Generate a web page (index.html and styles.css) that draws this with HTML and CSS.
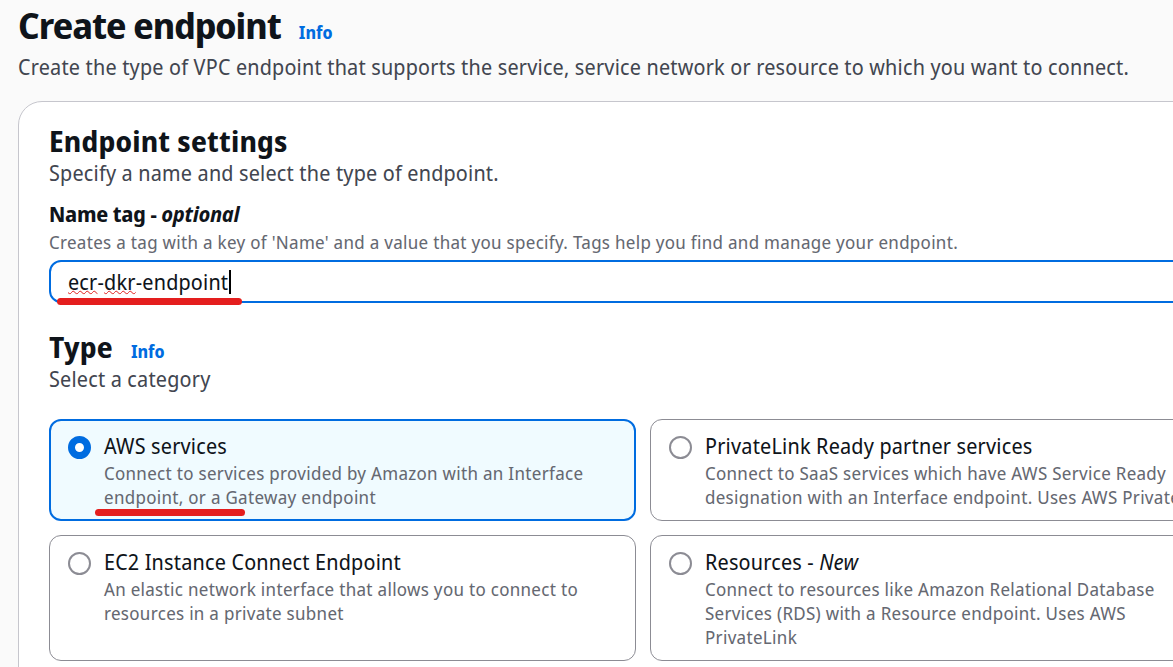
FILE: index.html
```html
<!DOCTYPE html>
<html lang="en">
<head>
<meta charset="utf-8">
<title>Create endpoint</title>
<link rel="stylesheet" href="styles.css">
</head>
<body>
<main class="page">
  <div class="page-header">
    <div class="title-row">
      <h1 class="title">Create endpoint</h1>
      <a class="info-link">Info</a>
    </div>
    <p class="page-desc">Create the type of VPC endpoint that supports the service, service network or resource to which you want to connect.</p>
  </div>

  <section class="card">
    <div class="card-body">
      <h2 class="section-title">Endpoint settings</h2>
      <p class="section-desc">Specify a name and select the type of endpoint.</p>

      <div class="field">
        <div class="field-label">Name tag - <i>optional</i></div>
        <div class="field-desc">Creates a tag with a key of 'Name' and a value that you specify. Tags help you find and manage your endpoint.</div>
        <div class="input">
          <span class="input-value"><span class="spell">ecr</span>-<span class="spell">dkr</span>-endpoint</span><span class="caret"></span>
          <span class="mark mark-input"></span>
        </div>
      </div>

      <div class="type-header">
        <h2 class="section-title">Type</h2>
        <a class="info-link">Info</a>
      </div>
      <p class="section-desc">Select a category</p>

      <div class="tiles">
        <div class="tile selected">
          <span class="radio checked"></span>
          <div class="tile-text">
            <div class="tile-title">AWS services</div>
            <div class="tile-desc">Connect to services provided by Amazon with an Interface<br>endpoint, or a Gateway endpoint</div>
          </div>
          <span class="mark mark-tile"></span>
        </div>
        <div class="tile">
          <span class="radio"></span>
          <div class="tile-text">
            <div class="tile-title">PrivateLink Ready partner services</div>
            <div class="tile-desc">Connect to SaaS services which have AWS Service Ready<br>designation with an Interface endpoint. Uses AWS PrivateLink</div>
          </div>
        </div>
        <div class="tile">
          <span class="radio"></span>
          <div class="tile-text">
            <div class="tile-title">EC2 Instance Connect Endpoint</div>
            <div class="tile-desc">An elastic network interface that allows you to connect to<br>resources in a private subnet</div>
          </div>
        </div>
        <div class="tile">
          <span class="radio"></span>
          <div class="tile-text">
            <div class="tile-title">Resources - <i>New</i></div>
            <div class="tile-desc">Connect to resources like Amazon Relational Database<br>Services (RDS) with a Resource endpoint. Uses AWS<br>PrivateLink</div>
          </div>
        </div>
      </div>
    </div>
  </section>
</main>
</body>
</html>
```
FILE: styles.css
```css
* { box-sizing: border-box; }

html, body { margin: 0; }

body {
  background: #fafafa;
  font-family: "Noto Sans Display", "Open Sans", sans-serif;
  color: #0f141a;
  letter-spacing: 0.2px;
  height: 667px;
  overflow: hidden;
}

.page { padding: 4px 0 0 18px; }

.title-row {
  display: flex;
  align-items: baseline;
  gap: 18px;
}

.title {
  margin: 0;
  font-size: 36px;
  line-height: 44px;
  font-weight: 700;
  letter-spacing: -1px;
}

.info-link {
  font-size: 17px;
  font-weight: 700;
  color: #006ce0;
  letter-spacing: 0;
}

.page-desc {
  margin: 4px 0 0;
  font-size: 21px;
  line-height: 30px;
  color: #424650;
}

.card {
  margin-top: 19px;
  width: 1300px;
  background: #fff;
  border: 1px solid #c6c6cd;
  border-radius: 24px 0 0 0;
  padding: 22px 0 40px 30px;
}

.card-body { width: 1188px; }

.section-title {
  margin: 0;
  font-size: 28px;
  line-height: 34px;
  font-weight: 700;
  letter-spacing: 0.2px;
}

.section-desc {
  margin: 0;
  font-size: 21px;
  line-height: 30px;
  color: #424650;
}

.field { margin-top: 11px; }

.field-label {
  font-size: 21px;
  line-height: 30px;
  font-weight: 700;
  letter-spacing: -0.25px;
}

.field-desc {
  margin-top: 1px;
  font-size: 18px;
  line-height: 24px;
  color: #656871;
  letter-spacing: 0.3px;
}

.input {
  position: relative;
  margin-top: 6px;
  height: 43px;
  border: 2px solid #006ce0;
  border-radius: 12px;
  background: #fff;
  display: flex;
  align-items: center;
  padding-left: 17px;
  font-size: 21px;
  color: #0f141a;
}

.spell {
  text-decoration: underline wavy #e0201e;
  text-decoration-thickness: 1.2px;
  text-underline-offset: 0px;
  text-decoration-skip-ink: none;
}

.caret {
  width: 1.5px;
  height: 24px;
  margin-left: 1px;
  background: #000;
}

.mark {
  position: absolute;
  height: 7px;
  border-radius: 4px;
  background: #e41e1e;
}

.mark-input { left: 6px; top: 36px; width: 185px; }

.type-header {
  margin-top: 27px;
  display: flex;
  align-items: baseline;
  gap: 18px;
}

.tiles {
  margin-top: 25px;
  display: grid;
  grid-template-columns: 587px 587px;
  gap: 14px;
}

.tile {
  position: relative;
  display: flex;
  align-items: flex-start;
  gap: 13px;
  border: 1px solid #8c8c94;
  border-radius: 12px;
  background: #fff;
  padding: 10.5px 18px 11.5px 18px;
}

.tile.selected {
  border: 2px solid #006ce0;
  background: #f0fbff;
  padding: 9.5px 17px 10.5px 17px;
}

.radio {
  flex: none;
  width: 23px;
  height: 23px;
  margin-top: 5px;
  border-radius: 50%;
  border: 2px solid #8c8c94;
  background: #fff;
}

.radio.checked { border: 7.5px solid #006ce0; }

.tile-text { min-width: 0; }

.tile-title {
  font-size: 21px;
  line-height: 30px;
}

.tile-desc {
  font-size: 18px;
  line-height: 24px;
  color: #656871;
  letter-spacing: 0.3px;
  white-space: nowrap;
}

.mark-tile { left: 44px; top: 88px; width: 150px; }
```
